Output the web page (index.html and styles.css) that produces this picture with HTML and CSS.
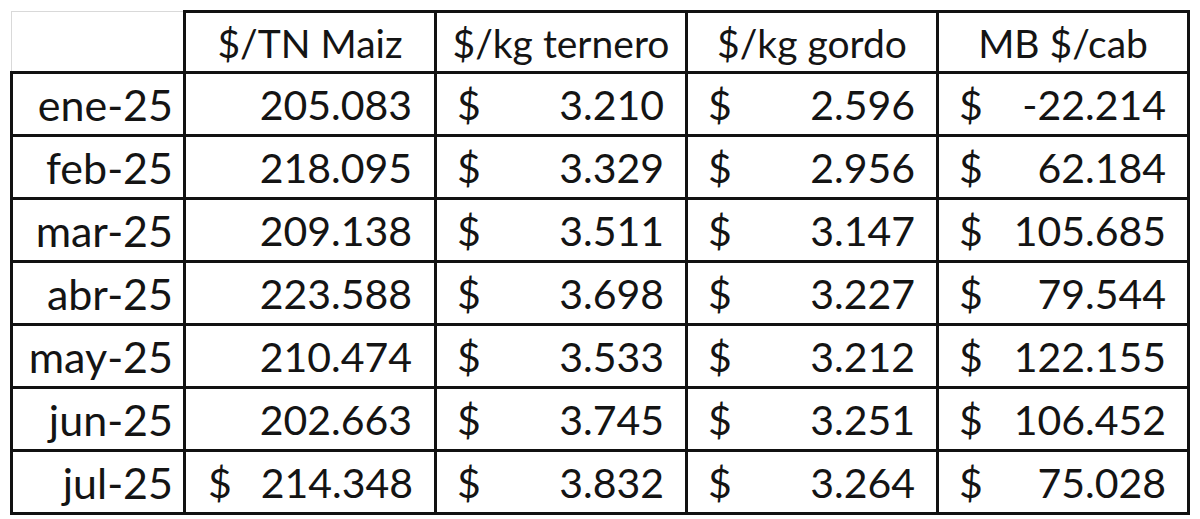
FILE: index.html
```html
<!DOCTYPE html>
<html lang="es">
<head>
<meta charset="utf-8">
<title>Tabla</title>
<link rel="stylesheet" href="styles.css">
</head>
<body>
<table class="sheet">
  <colgroup>
    <col class="c-date">
    <col class="c-num">
    <col class="c-num">
    <col class="c-num">
    <col class="c-num">
  </colgroup>
  <thead>
    <tr>
      <th class="corner"></th>
      <th>$/TN Maiz</th>
      <th>$/kg ternero</th>
      <th>$/kg gordo</th>
      <th>MB $/cab</th>
    </tr>
  </thead>
  <tbody>
    <tr>
      <td class="date">ene-25</td>
      <td class="plain">205.083</td>
      <td><span class="acc"><span>$</span><span>3.210</span></span></td>
      <td><span class="acc"><span>$</span><span>2.596</span></span></td>
      <td><span class="acc"><span>$</span><span>-22.214</span></span></td>
    </tr>
    <tr>
      <td class="date">feb-25</td>
      <td class="plain">218.095</td>
      <td><span class="acc"><span>$</span><span>3.329</span></span></td>
      <td><span class="acc"><span>$</span><span>2.956</span></span></td>
      <td><span class="acc"><span>$</span><span>62.184</span></span></td>
    </tr>
    <tr>
      <td class="date">mar-25</td>
      <td class="plain">209.138</td>
      <td><span class="acc"><span>$</span><span>3.511</span></span></td>
      <td><span class="acc"><span>$</span><span>3.147</span></span></td>
      <td><span class="acc"><span>$</span><span>105.685</span></span></td>
    </tr>
    <tr>
      <td class="date">abr-25</td>
      <td class="plain">223.588</td>
      <td><span class="acc"><span>$</span><span>3.698</span></span></td>
      <td><span class="acc"><span>$</span><span>3.227</span></span></td>
      <td><span class="acc"><span>$</span><span>79.544</span></span></td>
    </tr>
    <tr>
      <td class="date">may-25</td>
      <td class="plain">210.474</td>
      <td><span class="acc"><span>$</span><span>3.533</span></span></td>
      <td><span class="acc"><span>$</span><span>3.212</span></span></td>
      <td><span class="acc"><span>$</span><span>122.155</span></span></td>
    </tr>
    <tr>
      <td class="date">jun-25</td>
      <td class="plain">202.663</td>
      <td><span class="acc"><span>$</span><span>3.745</span></span></td>
      <td><span class="acc"><span>$</span><span>3.251</span></span></td>
      <td><span class="acc"><span>$</span><span>106.452</span></span></td>
    </tr>
    <tr>
      <td class="date">jul-25</td>
      <td><span class="acc acc-tight"><span>$</span><span>214.348</span></span></td>
      <td><span class="acc"><span>$</span><span>3.832</span></span></td>
      <td><span class="acc"><span>$</span><span>3.264</span></span></td>
      <td><span class="acc"><span>$</span><span>75.028</span></span></td>
    </tr>
  </tbody>
</table>
</body>
</html>
```

FILE: styles.css
```css
html, body {
  margin: 0;
  padding: 0;
  background: #ffffff;
}

body {
  font-family: Lato, "Open Sans", "Noto Sans", sans-serif;
  color: #141414;
}

.sheet {
  margin: 10px 0 0 10px;
  border-collapse: collapse;
  table-layout: fixed;
  width: 1177px;
  font-size: 41px;
  line-height: 1;
}

.c-date { width: 173px; }
.c-num { width: 251px; }

.sheet th,
.sheet td {
  border: 3px solid #111111;
  padding: 0;
  white-space: nowrap;
  vertical-align: middle;
}

.sheet th {
  height: 56px;
  font-weight: 400;
  text-align: center;
  font-size: 39px;
  padding-top: 2px;
}

.sheet th.corner {
  border-top: 1px solid #d9d9d9;
  border-left: 1px solid #d9d9d9;
}

.sheet td {
  height: 60px;
}

.sheet td.date {
  text-align: right;
  padding-right: 10px;
  font-size: 43px;
}

.sheet td.plain {
  text-align: right;
  padding-right: 22px;
}

.acc {
  display: flex;
  justify-content: space-between;
  padding: 0 21px 0 20px;
}

.acc-tight {
  padding-left: 22px;
}
```
